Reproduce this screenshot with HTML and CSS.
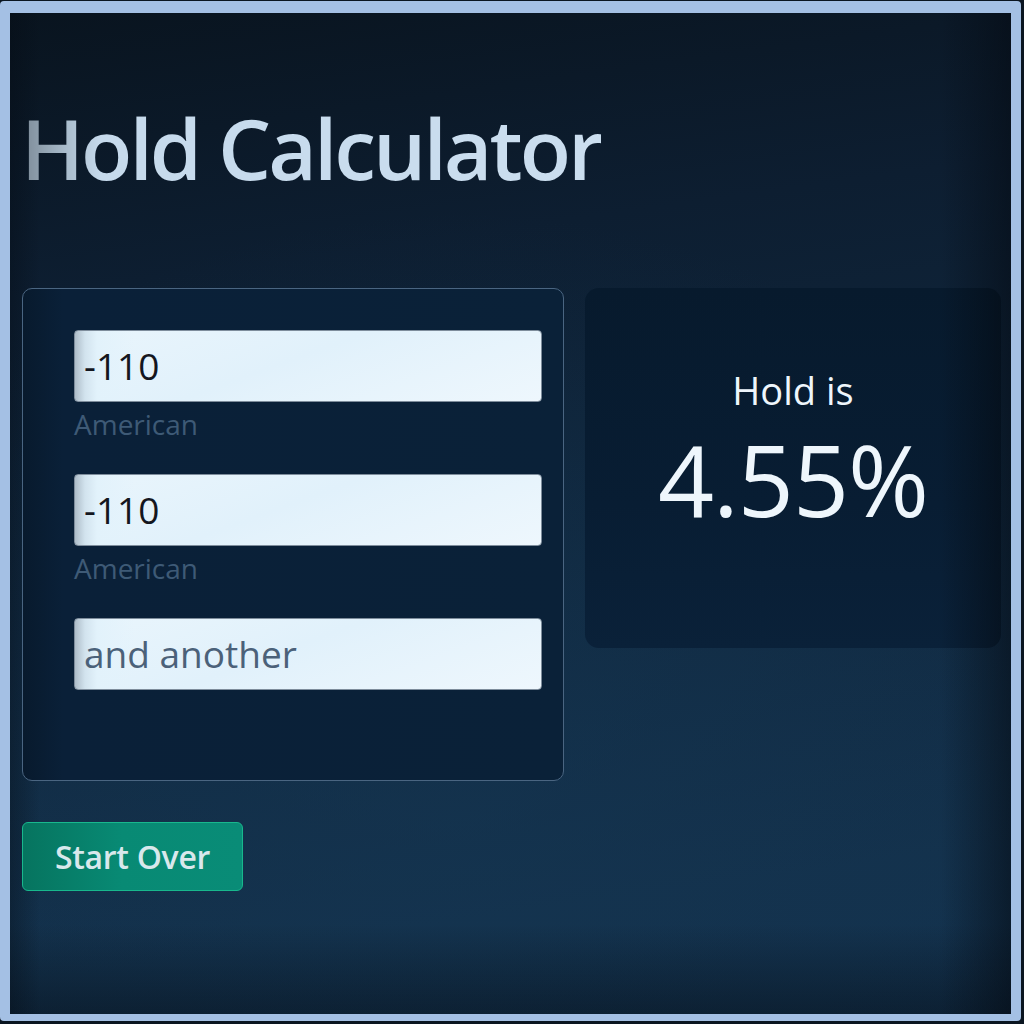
FILE: index.html
```html
<!DOCTYPE html>
<html lang="en">
<head>
  <meta charset="UTF-8" />
  <meta name="viewport" content="width=device-width, initial-scale=1" />
  <title>Hold Calculator</title>
  <link rel="stylesheet" href="styles.css">
</head>
<body>
  <div class="frame">
    <h1 class="title">Hold Calculator</h1>

    <div class="calc-row">
      <!-- Odds inputs -->
      <div class="odds-card">
        <div class="odds-field">
          <input class="odds-input" type="text" value="-110" />
          <div class="odds-label">American</div>
        </div>
        <div class="odds-field">
          <input class="odds-input" type="text" value="-110" />
          <div class="odds-label">American</div>
        </div>
        <div class="odds-field">
          <input class="odds-input" type="text" placeholder="and another" />
        </div>
      </div>

      <!-- Result -->
      <div class="result-card">
        <div class="result-caption">Hold is</div>
        <div class="result-value">4.55%</div>
      </div>
    </div>

    <button class="reset-btn">Start Over</button>
  </div>
</body>
</html>
```

FILE: styles.css
```css
body {
  margin: 0;
  background-color: #0a1520;
  font-family: 'Open Sans', 'Noto Sans', sans-serif;
}

.frame {
  box-sizing: border-box;
  width: 1021px;
  height: 1020px;
  margin-top: 1px;
  border-style: solid;
  border-color: #a4c0e4;
  border-width: 12px 10px 7px 10px;
  border-radius: 4px;
  padding: 0 10px 0 12px;
  background:
    linear-gradient(90deg, rgba(4, 10, 18, 0.35) 0, rgba(4, 10, 18, 0) 30px),
    linear-gradient(270deg, rgba(4, 10, 18, 0.55) 0, rgba(4, 10, 18, 0) 70px),
    linear-gradient(0deg, rgba(4, 10, 18, 0.45) 0, rgba(4, 10, 18, 0) 90px),
    radial-gradient(ellipse 70% 60% at 45% 80%, #15365280 0%, rgba(21, 54, 82, 0) 100%),
    linear-gradient(172deg, #09141f 0%, #0d1e31 25%, #10283f 55%, #13314c 85%, #13324e 100%);
}

/* Heading */
.title {
  margin: 85px 0 0 -1px;
  font-size: 84px;
  line-height: 1.2;
  font-weight: 600;
  letter-spacing: -3px;
  background: linear-gradient(90deg, #7b8996 0, #a9bccc 45px, #c6daec 80px, #cbdeef 100%);
  -webkit-background-clip: text;
  background-clip: text;
  color: transparent;
  width: max-content;
}

.calc-row {
  display: flex;
  align-items: flex-start;
  gap: 21px;
  margin-top: 89px;
}

/* Left card with the odds */
.odds-card {
  box-sizing: border-box;
  flex-shrink: 0;
  width: 542px;
  padding: 41px 21px 90px 51px;
  border: 1px solid #4a6581;
  border-radius: 10px;
  background: linear-gradient(90deg, #081a2d 0, #0a2038 40px, #0a2138 100%);
}

.odds-input {
  display: block;
  box-sizing: border-box;
  width: 100%;
  height: 72px;
  padding: 0 9px;
  border: 1px solid #7e8d9c;
  border-radius: 4px;
  font-family: inherit;
  font-size: 37px;
  color: #14161e;
  background:
    linear-gradient(90deg, #aebdc9 0, #d2e3ee 10px, #e2f2fb 22px, rgba(226, 242, 251, 0) 60px),
    linear-gradient(160deg, #e9f5fc 0%, #e1f1fb 45%, #eef7fd 100%);
  outline: none;
}

.odds-input::placeholder {
  color: #4b6179;
}

.odds-label {
  margin: 2px 0 30px;
  font-size: 28px;
  line-height: 40px;
  color: #3e5a76;
}

/* Right card with the result */
.result-card {
  box-sizing: border-box;
  flex-shrink: 0;
  width: 416px;
  height: 360px;
  padding-top: 80px;
  border-radius: 14px;
  text-align: center;
  color: #eef6fc;
  background:
    linear-gradient(270deg, rgba(3, 9, 16, 0.55) 0, rgba(3, 9, 16, 0) 60px),
    linear-gradient(180deg, #071a2d 0%, #081d33 60%, #0a2139 100%);
}

.result-caption {
  font-size: 38px;
  line-height: 1.2;
}

.result-value {
  margin-top: 8px;
  font-size: 98px;
  line-height: 1.2;
  letter-spacing: -1px;
}

.reset-btn {
  display: block;
  box-sizing: border-box;
  width: 221px;
  height: 69px;
  margin-top: 41px;
  border: 1px solid #18b88d;
  border-radius: 6px;
  font-family: inherit;
  font-size: 32px;
  font-weight: 600;
  letter-spacing: -0.3px;
  color: #d8e8ec;
  background: linear-gradient(90deg, #06745f 0%, #088a74 45%, #098c77 100%);
  cursor: pointer;
}
```
